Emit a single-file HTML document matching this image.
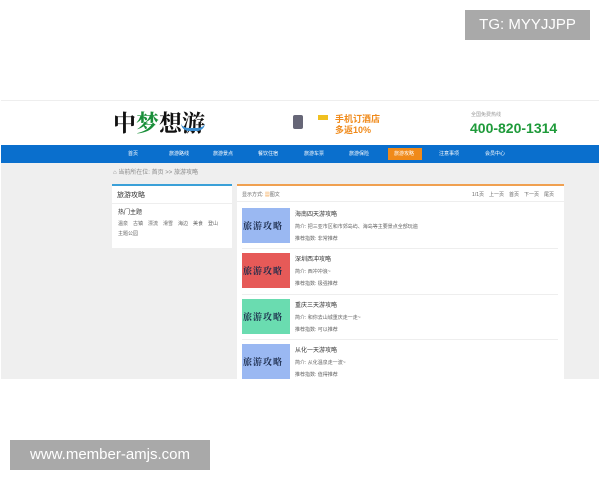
<!DOCTYPE html>
<html><head><meta charset="utf-8"><style>
*{margin:0;padding:0;box-sizing:border-box}
body{width:600px;height:480px;background:#fff;position:relative;overflow:hidden;font-family:"Liberation Sans","Noto Sans CJK SC",sans-serif}
.a{position:absolute}
.t{font-size:5px;color:#666;white-space:nowrap}
.im{position:absolute;left:6px;font-size:9px;color:#1a2a4a;font-family:'Noto Serif CJK SC',serif;font-weight:bold;letter-spacing:1px;line-height:10px}
</style></head><body>
<div class="a" style="left:465px;top:10px;width:125px;height:30px;background:#a9a9a9;color:#fff;font-size:15px;line-height:30px;text-align:center">TG: MYYJJPP</div>
<div class="a" style="left:1px;top:100px;width:598px;height:279px;background:#efefef;border-top:1px solid #eee;overflow:hidden">
 <div class="a" style="left:0;top:0;width:598px;height:44px;background:#fff"></div>
 <div class="a" style="left:112px;top:4px;font-size:23px;font-family:'Noto Serif CJK SC',serif;font-weight:bold;color:#111">中<span style="color:#1a8f3a">梦</span>想游</div>
 <div class="a" style="left:180px;top:22px;width:24px;height:8px;border-bottom:3px solid #3a8dd0;border-radius:0 0 10px 10px"></div>
 <div class="a" style="left:292px;top:14px;width:10px;height:14px;background:#667;border-radius:2px"></div>
 <div class="a" style="left:317px;top:14px;width:10px;height:5px;background:#f0c020"></div>
 <div class="a" style="left:334px;top:13px;font-size:9px;line-height:11px;color:#f08a1a;font-weight:bold">手机订酒店<br>多返10%</div>
 <div class="a t" style="left:470px;top:10px;color:#999">全国免费热线</div>
 <div class="a" style="left:469px;top:19px;font-size:14px;font-weight:bold;color:#1e9a3a">400-820-1314</div>
 <div class="a" style="left:0;top:44px;width:598px;height:18px;background:#0a6fcd"></div>
 <div class="a" style="left:387px;top:47px;width:34px;height:12px;background:#f08a1a"></div>
 <div class="a" style="left:0;top:44px;width:598px;height:18px;font-size:5px;color:#fff;line-height:18px">
  <span class="a" style="left:127px">首页</span><span class="a" style="left:168px">旅游路线</span><span class="a" style="left:212px">旅游景点</span><span class="a" style="left:257px">餐饮住宿</span><span class="a" style="left:303px">旅游车票</span><span class="a" style="left:348px">旅游保险</span><span class="a" style="left:393px">旅游攻略</span><span class="a" style="left:438px">注意事项</span><span class="a" style="left:484px">会员中心</span>
 </div>
 <div class="a t" style="left:112px;top:66px;font-size:6px;color:#888">⌂ 当前所在位: 首页 &gt;&gt; 旅游攻略</div>
 <div class="a" style="left:111px;top:83px;width:120px;height:64px;background:#fff;border-top:2px solid #3aa0d8">
  <div style="font-size:7px;color:#333;padding:4px 5px;border-bottom:1px solid #eee;height:18px">旅游攻略</div>
  <div class="t" style="padding:3px 6px;font-size:6px;color:#333">热门主题</div>
  <div class="t" style="padding:0 6px;line-height:10px">温泉　古镇　漂流　滑雪　海边　美食　登山<br>主题公园</div>
 </div>
 <div class="a" style="left:236px;top:83px;width:327px;height:196px;background:#fff;border-top:2px solid #f0a050;overflow:hidden">
  <div style="height:16px;border-bottom:1px solid #eee;position:relative">
   <span class="a t" style="left:5px;top:5px">显示方式: <span style="color:#f08a1a">▦</span>图文</span>
   <span class="a t" style="right:10px;top:5px">1/1页　上一页　首页　下一页　尾页</span>
  </div>
  <div class="a" style="left:5px;top:22px;width:48px;height:35px;background:#9ab8f2"></div>
  <div class="a" style="left:5px;top:67px;width:48px;height:35px;background:#e65a58"></div>
  <div class="a" style="left:5px;top:113px;width:48px;height:35px;background:#6adcb0"></div>
  <div class="a" style="left:5px;top:158px;width:48px;height:38px;background:#9ab8f2"></div>
  <div class="im" style="top:35px">旅游攻略</div>
  <div class="im" style="top:80px">旅游攻略</div>
  <div class="im" style="top:126px">旅游攻略</div>
  <div class="im" style="top:171px">旅游攻略</div>
  <div class="a" style="left:5px;top:62px;width:316px;border-top:1px solid #eee"></div>
  <div class="a" style="left:5px;top:108px;width:316px;border-top:1px solid #eee"></div>
  <div class="a" style="left:5px;top:153px;width:316px;border-top:1px solid #eee"></div>
  <div class="a t" style="left:58px;top:23px;line-height:12px"><span style="font-size:6px;color:#333">海南四天游攻略</span><br>简介: 把三亚市区和市郊岛屿、海岛等主要景点全部玩遍<br>推荐指数: 非常推荐</div>
  <div class="a t" style="left:58px;top:68px;line-height:12px"><span style="font-size:6px;color:#333">深圳西冲攻略</span><br>简介: 西冲冲浪~<br>推荐指数: 极强推荐</div>
  <div class="a t" style="left:58px;top:114px;line-height:12px"><span style="font-size:6px;color:#333">重庆三天游攻略</span><br>简介: 和你去山城重庆走一走~<br>推荐指数: 可以推荐</div>
  <div class="a t" style="left:58px;top:159px;line-height:12px"><span style="font-size:6px;color:#333">从化一天游攻略</span><br>简介: 从化温泉走一波~<br>推荐指数: 值得推荐</div>
 </div>
</div>
<div class="a" style="left:10px;top:440px;width:200px;height:30px;background:#a9a9a9;color:#fff;font-size:15px;line-height:30px;text-align:center">www.member-amjs.com</div>
</body></html>
